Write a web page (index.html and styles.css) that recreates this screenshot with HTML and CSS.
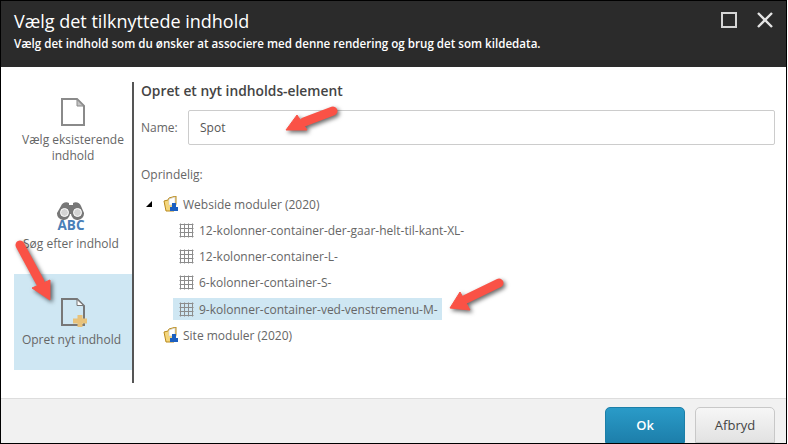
FILE: index.html
```html
<!DOCTYPE html>
<html lang="da">
<head>
    <meta charset="UTF-8">
    <title>Vælg det tilknyttede indhold</title>
    <link rel="stylesheet" href="styles.css">
</head>
<body>
    <div class="dialog">
        <header class="head">
            <div class="head_txt">
                <h1>Vælg det tilknyttede indhold</h1>
                <p>Vælg det indhold som du ønsker at associere med denne rendering og brug det som kildedata.</p>
            </div>
            <div class="head_btns">
                <svg width="16" height="16" viewBox="0 0 16 16"><rect x="1" y="1" width="14" height="14" fill="none" stroke="#d6d6d6" stroke-width="2"/></svg>
                <svg width="16" height="16" viewBox="0 0 16 16"><path d="M1 1l14 14M15 1L1 15" fill="none" stroke="#e4e4e4" stroke-width="2.4"/></svg>
            </div>
        </header>

        <div class="main">
            <nav class="side">
                <div class="side_item">
                    <svg class="side_icon" width="24" height="28" viewBox="0 0 24 28"><path d="M1 1h15l7 7v19H1z" fill="#fff" stroke="#8a8a8a" stroke-width="2"/><path d="M16 1.500v6.500h6.500z" fill="#c4c4c4" stroke="#8a8a8a"/></svg>
                    <span>Vælg eksisterende indhold</span>
                </div>
                <div class="side_item">
                    <div class="side_icon search_icon">
                        <svg width="32" height="19" viewBox="0 0 32 19">
                            <path d="M6 5c1-3 5-5 8-3v2h4V2c3-2 7 0 8 3l3 7a6.500 6.500 0 0 1-13 1h-0.500l-0.500 0a6.500 6.500 0 0 1-13-1z" fill="#777"/>
                            <circle cx="9.500" cy="11.500" r="4" fill="#d4d4d4" stroke="#fff"/><circle cx="22.500" cy="11.500" r="4" fill="#d4d4d4" stroke="#fff"/>
                        </svg>
                        <b class="abc">ABC</b>
                    </div>
                    <span>Søg efter indhold</span>
                </div>
                <div class="side_item active">
                    <svg class="side_icon" width="27" height="29" viewBox="0 0 27 29"><path d="M1 1h15l7 7v19H1z" fill="none" stroke="#777" stroke-width="2"/><path d="M16 1.500v6h6.500z" fill="#fff" stroke="#777"/><path d="M12 23h14M19 17v12" stroke="#e8c27a" stroke-width="5"/></svg>
                    <span>Opret nyt indhold</span>
                </div>
            </nav>

            <section class="content">
                <h2>Opret et nyt indholds-element</h2>
                <div class="name_row">
                    <label for="name">Name:</label>
                    <input id="name" type="text" value="Spot">
                </div>
                <p class="origin">Oprindelig:</p>
                <ul class="tree">
                    <li class="root">
                        <span class="toggle"></span>
                        <svg class="folder" width="16" height="16" viewBox="0 0 16 16"><path d="M1 5l4-1 1-2 7-2v8l-2 7H3z" fill="#f4d67c" stroke="#b98a1c"/><path d="M6 3l6-2v8H6z" fill="#fff" stroke="#c9c9c9" stroke-width=".6"/><path d="M9 7h4v4H9zM7 11h4v4H7zM11 11h4v4h-4z" fill="#1b5fc0"/></svg>
                        Webside moduler (2020)
                    </li>
                    <li class="leaf"><svg class="grid" width="15" height="15" viewBox="0 0 15 15"><path d="M.5 1.500h14M.5 5.500h14M.5 9.500h14M.5 13.500h14M1.500.5v14M5.500.5v14M9.500.5v14M13.500.5v14" stroke="#8c8c8c" fill="none"/></svg>12-kolonner-container-der-gaar-helt-til-kant-XL-</li>
                    <li class="leaf"><svg class="grid" width="15" height="15" viewBox="0 0 15 15"><path d="M.5 1.500h14M.5 5.500h14M.5 9.500h14M.5 13.500h14M1.500.5v14M5.500.5v14M9.500.5v14M13.500.5v14" stroke="#8c8c8c" fill="none"/></svg>12-kolonner-container-L-</li>
                    <li class="leaf"><svg class="grid" width="15" height="15" viewBox="0 0 15 15"><path d="M.5 1.500h14M.5 5.500h14M.5 9.500h14M.5 13.500h14M1.500.5v14M5.500.5v14M9.500.5v14M13.500.5v14" stroke="#8c8c8c" fill="none"/></svg>6-kolonner-container-S-</li>
                    <li class="leaf selected"><svg class="grid" width="15" height="15" viewBox="0 0 15 15"><path d="M.5 1.500h14M.5 5.500h14M.5 9.500h14M.5 13.500h14M1.500.5v14M5.500.5v14M9.500.5v14M13.500.5v14" stroke="#8c8c8c" fill="none"/></svg>9-kolonner-container-ved-venstremenu-M-</li>
                    <li class="root">
                        <span class="toggle off"></span>
                        <svg class="folder" width="16" height="16" viewBox="0 0 16 16"><path d="M1 5l4-1 1-2 7-2v8l-2 7H3z" fill="#f4d67c" stroke="#b98a1c"/><path d="M6 3l6-2v8H6z" fill="#fff" stroke="#c9c9c9" stroke-width=".6"/><path d="M9 7h4v4H9zM7 11h4v4H7zM11 11h4v4h-4z" fill="#1b5fc0"/></svg>
                        Site moduler (2020)
                    </li>
                </ul>
            </section>
        </div>

        <footer class="foot">
            <button class="ok">Ok</button>
            <button class="cancel">Afbryd</button>
        </footer>

        <!-- red arrows on top of the screenshot -->
        <svg class="arrows" width="788" height="444" viewBox="0 0 788 444">
            <g fill="#fa5246" stroke="#fa5246">
                <path d="M304 122L333 111" stroke-width="9" stroke-linecap="round"/>
                <path d="M286 130L297 115L307 130Z" stroke-width="1"/>
                <path d="M466 299L499 283" stroke-width="9" stroke-linecap="round"/>
                <path d="M450 308L460 292L470 310Z" stroke-width="1"/>
                <path d="M20 245L40 282" stroke-width="9" stroke-linecap="round"/>
                <path d="M50 300L32 288L50 280Z" stroke-width="1"/>
            </g>
        </svg>
    </div>
</body>
</html>
```

FILE: styles.css
```css
*{
    box-sizing: border-box;
}
body{
    margin: 0;
    font-family: "Open Sans", sans-serif;
    background-color: white;
}
.dialog{
    position: relative;
    display: flex;
    flex-direction: column;
    width: 787px;
    height: 444px;
    border: solid 1px black;
    background-color: white;
}

.head{
    display: flex;
    justify-content: space-between;
    height: 66px;
    padding: 7px 13px 0 13px;
    background-color: #2b2b2b;
    color: white;
}
h1{
    margin: 0;
    font-size: 18px;
    font-weight: 400;
    line-height: 26px;
}
.head p{
    margin: 2px 0 0;
    font-size: 11.6px;
    font-weight: 600;
    line-height: 16px;
}
.head_btns{
    display: flex;
    gap: 20px;
    padding-top: 4px;
}

.main{
    display: flex;
    flex: 1;
    padding-top: 15px;
}
.side{
    width: 133px;
    height: 301px;
    padding-left: 13px;
    border-right: solid 2px #555;
    display: flex;
    flex-direction: column;
}
.side_item{
    display: flex;
    flex-direction: column;
    align-items: center;
    text-align: center;
    padding: 0 4px;
    font-size: 12px;
    line-height: 16px;
    color: #666;
}
.side_item:nth-child(1){
    height: 100px;
    padding-top: 16px;
}
.side_item:nth-child(1) .side_icon{
    margin-bottom: 6px;
}
.side_item:nth-child(2){
    height: 92px;
    padding: 19px 8px 0 4px;
}
.search_icon{
    display: flex;
    flex-direction: column;
    align-items: center;
    height: 30px;
    margin-bottom: 5px;
}
.search_icon svg{
    display: block;
}
.side_item.active{
    height: 96px;
    background-color: #cfe7f3;
    padding: 24px 7px 0 4px;
}
.side_item.active .side_icon{
    margin: 0 0 5px 5px;
}
.abc{
    font-size: 13.5px;
    font-weight: 700;
    line-height: 11px;
    color: #4a80b8;
}

.content{
    flex: 1;
    padding: 0 11px 0 7px;
}
h2{
    margin: 0;
    font-size: 13.8px;
    font-weight: 600;
    line-height: 18px;
    color: #444;
}
.name_row{
    display: flex;
    align-items: center;
    margin-top: 10px;
    font-size: 12px;
    color: #666;
}
.name_row label{
    width: 47px;
}
input{
    flex: 1;
    height: 35px;
    padding: 0 11px;
    font: 12px "Open Sans", sans-serif;
    color: #555;
    border: solid 1px #ccc;
    border-radius: 2px;
}
.origin{
    margin: 22px 0 0;
    font-size: 12px;
    line-height: 16px;
    color: #666;
}
.tree{
    list-style: none;
    margin: 8px 0 0;
    padding: 0;
    font-size: 12px;
    color: #666;
}
.tree li{
    display: flex;
    align-items: center;
    height: 26px;
}
.root{
    padding-left: 5px;
}
.toggle{
    width: 0;
    height: 0;
    margin-right: 11px;
    border-style: solid;
    border-width: 0 0 6px 6px;
    border-color: transparent transparent black transparent;
}
.toggle.off{
    visibility: hidden;
}
.folder{
    margin-right: 4px;
}
.tree .leaf{
    margin-left: 32px;
    padding-left: 6px;
    width: fit-content;
}
.leaf .grid{
    margin-right: 5px;
}
.tree .selected{
    height: 22px;
    margin: 3px 0 2px 32px;
    padding-right: 4px;
    background-color: #cfe7f3;
}

.foot{
    display: flex;
    justify-content: flex-end;
    gap: 10px;
    height: 45px;
    padding: 8px 11px 0 0;
    background-color: #f1f1f1;
    border-top: solid 1px #ddd;
}
button{
    width: 80px;
    height: 36px;
    font: 13px "Open Sans", sans-serif;
    border-radius: 5px 5px 0 0;
}
.ok{
    color: white;
    font-weight: 600;
    border: solid 1px #1c7fa8;
    background-image: linear-gradient(#2a9bc8, #1d7fab);
}
.cancel{
    color: #444;
    border: solid 1px #c8c8c8;
    background-image: linear-gradient(#f6f6f6, #e2e2e2);
}

.arrows{
    position: absolute;
    left: -1px;
    top: -1px;
    pointer-events: none;
    filter: drop-shadow(2px 2px 2px rgba(0,0,0,0.6));
}
```
